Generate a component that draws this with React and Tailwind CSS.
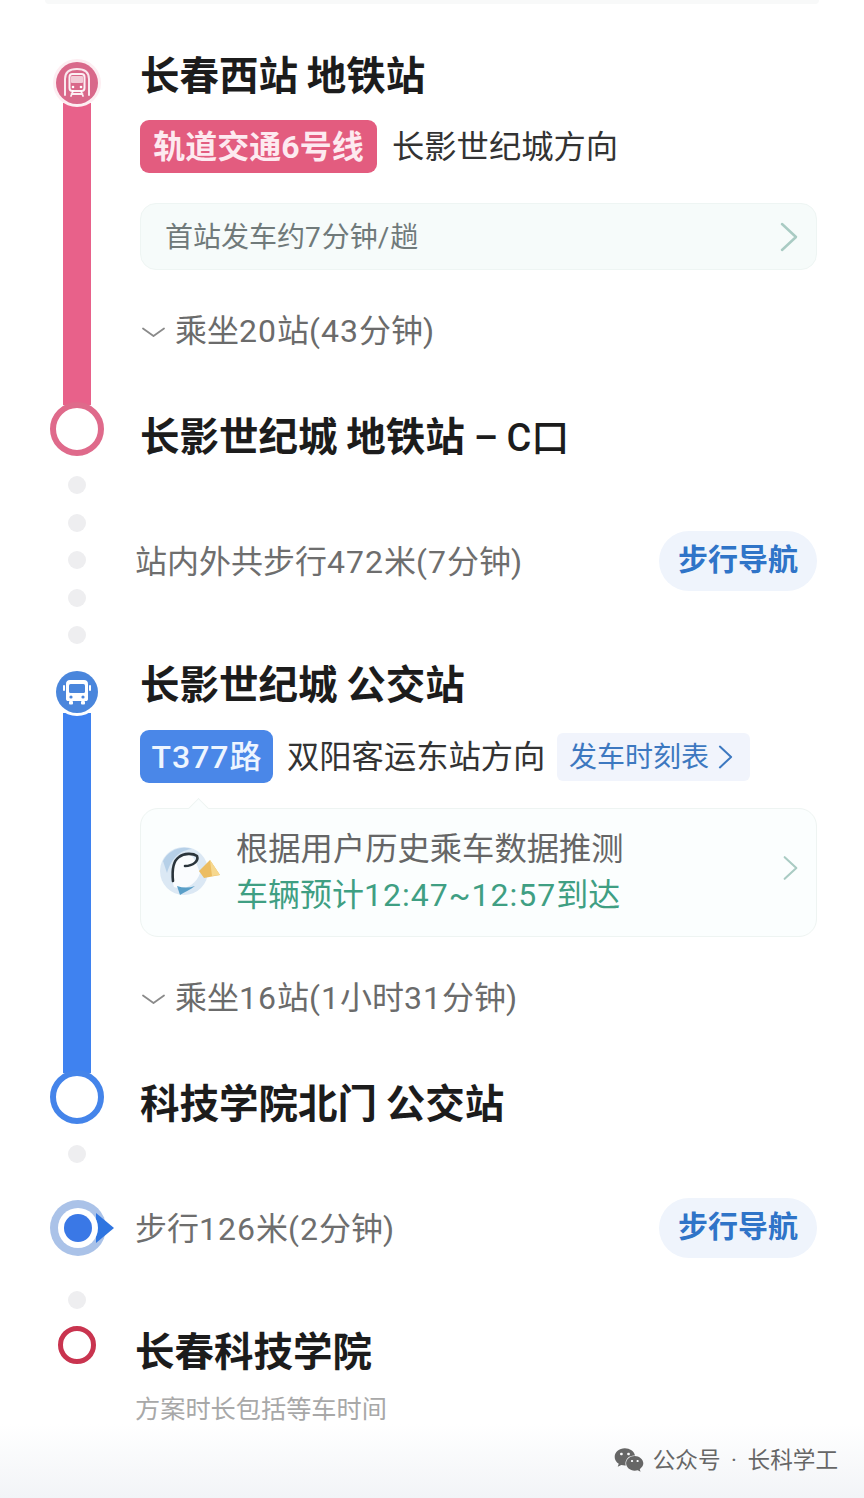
import React from 'react';
import { FaWeixin } from 'react-icons/fa';

const Chevron = ({ className, color = '#a9cbc3', w = 18, h = 30, sw = 2.5 }) => (
  <svg className={className} width={w} height={h} viewBox="0 0 18 30" fill="none">
    <path d="M2 2 L16 15 L2 28" stroke={color} strokeWidth={sw} strokeLinecap="round" strokeLinejoin="round" />
  </svg>
);

const TrainIcon = () => (
  <svg width="42" height="42" viewBox="0 0 42 42" fill="none" stroke="#fff" strokeLinecap="round" strokeLinejoin="round">
    <path d="M9 33 V17 C9 10 14 7 21 7 C28 7 33 10 33 17 V33" strokeWidth="2" opacity="0.85" />
    <rect x="13.5" y="12" width="15" height="17" rx="3" strokeWidth="2" opacity="0.9" />
    <rect x="15" y="14" width="12" height="7" rx="1" fill="#fff" stroke="none" opacity="0.65" />
    <circle cx="17" cy="25" r="1.3" fill="#fff" stroke="none" />
    <circle cx="25" cy="25" r="1.3" fill="#fff" stroke="none" />
    <path d="M15 34 L17 29 M27 34 L25 29 M15.5 32 H26.5" strokeWidth="1.8" opacity="0.9" />
  </svg>
);

const BusIcon = () => (
  <svg width="42" height="42" viewBox="0 0 42 42" fill="none">
    <path d="M14 9 H28 C30.5 9 32 10.5 32 13 V28 C32 29.5 31 30 30 30 H12 C11 30 10 29.5 10 28 V13 C10 10.5 11.5 9 14 9 Z" fill="#fff" />
    <rect x="13" y="13" width="16" height="9" rx="1.5" fill="#4a86dc" />
    <rect x="7" y="14" width="2" height="6" rx="1" fill="#fff" />
    <rect x="33" y="14" width="2" height="6" rx="1" fill="#fff" />
    <rect x="13" y="30" width="4" height="3.5" rx="1" fill="#fff" />
    <rect x="25" y="30" width="4" height="3.5" rx="1" fill="#fff" />
    <circle cx="15" cy="26" r="1.6" fill="#4a86dc" />
    <circle cx="27" cy="26" r="1.6" fill="#4a86dc" />
  </svg>
);

const Mascot = () => (
  <svg width="62" height="60" viewBox="0 0 62 60" fill="none">
    <circle cx="24" cy="28" r="24" fill="#dbe8f4" />
    <path d="M3 18 C8 8 20 2 32 6 C22 7 12 13 7 30 Z" fill="#b6d0e8" />
    <path d="M14 44 C24 48 36 42 40 30 C37 22 35 14 28 10 C21 9 15 15 14 24 C13 32 12 38 14 44 Z" fill="#fafcfe" />
    <path d="M13 38 C12 28 13 18 19 14 C24 10 33 10 37 13 C39 18 33 23 25 23" stroke="#2a343b" strokeWidth="2.6" strokeLinecap="round" />
    <path d="M17 43 C18 46 19 49 20 52 C24 49 30 47 35 43 C29 45 23 45 17 43 Z" fill="#5a9fc8" />
    <path d="M39 28 L50 17 L60 32 L44 35 Z" fill="#ecbd62" />
    <path d="M50 17 L60 32 L52 33 Z" fill="#f6d88f" />
  </svg>
);

const Locator = () => (
  <svg width="66" height="58" viewBox="0 0 66 58" fill="none">
    <circle cx="28" cy="29" r="28" fill="#aac2e8" />
    <path d="M46 14 L64 29 L46 44 Z" fill="#2f75e0" />
    <circle cx="28" cy="29" r="20" fill="#fff" />
    <circle cx="28" cy="29" r="14" fill="#3a78e6" />
  </svg>
);

const Dot = () => <div className="w-[18px] h-[18px] rounded-full bg-[#eeeef0] shrink-0" />;

// digits in the shot run wider than the font's own
const Num = ({ children }) => <span className="tracking-[1px]">{children}</span>;

const Title = ({ children, className = '' }) => (
  <div className={`h-[50px] leading-[52px] text-[39.5px] font-bold text-[#1c1c1c] whitespace-nowrap [word-spacing:-1px] ${className}`}>{children}</div>
);

const RideInfo = ({ children }) => (
  <div className="flex items-center h-[48px] mt-[37px]">
    <svg className="ml-[2px] mt-[3px]" width="23" height="11" viewBox="0 0 23 11" fill="none">
      <path d="M1 1.5 L11.5 9 L22 1.5" stroke="#8a8a8a" strokeWidth="1.8" strokeLinecap="round" strokeLinejoin="round" />
    </svg>
    <span className="ml-[10px] text-[32px] text-[#6b6b6b] whitespace-nowrap">{children}</span>
  </div>
);

const NavButton = () => (
  <button className="w-[158px] h-[60px] pb-[4px] rounded-full bg-[#eff4fc] text-[30px] font-bold text-[#2f74c8] shrink-0">步行导航</button>
);

export default function App() {
  return (
    <div className="w-[864px] h-[1498px] overflow-hidden bg-white font-['Roboto','Noto_Sans_CJK_SC',sans-serif]">
      <div className="mx-[45px] h-[4px] rounded-b-md bg-[#f8f9f9]" />

      {/* 地铁段 */}
      <div className="flex pr-[47px]">
        <div className="w-[140px] pl-[14px] flex flex-col items-center shrink-0">
          <div className="w-[42px] h-[42px] mt-[58px] rounded-full bg-[#d9688a] ring-[3px] ring-[#fdeef2] relative z-10 flex items-center justify-center">
            <TrainIcon />
          </div>
          <div className="w-[28px] h-[302px] bg-[#e8618a] -mt-[1px]" />
          <div className="w-[54px] h-[54px] -mt-[3px] rounded-full border-[6px] border-[#df6a8b] bg-white relative z-10" />
        </div>
        <div className="flex-1 pt-[46px]">
          <Title className="leading-[54px]">长春西站 地铁站</Title>
          <div className="flex items-center mt-[20px]">
            <div className="w-[237px] h-[53px] rounded-[9px] bg-[#e35c7f] text-[32px] font-bold text-[#fdeaf0] flex items-center justify-center whitespace-nowrap">轨道交通6号线</div>
            <span className="ml-[15px] pt-[2px] text-[32.3px] text-[#333]">长影世纪城方向</span>
          </div>
          <div className="flex items-center justify-between h-[67px] mt-[30px] pl-[24px] pr-[18px] rounded-[16px] bg-[#f6fbfa] border border-[#eef5f3]">
            <span className="pt-[2px] text-[28px] text-[#707a7a]">首站发车约<Num>7</Num>分钟<Num>/</Num>趟</span>
            <Chevron />
          </div>
          <RideInfo>乘坐<Num>20</Num>站<Num>(43</Num>分钟<Num>)</Num></RideInfo>
          <Title className="mt-[57px]">长影世纪城 地铁站 <span className="font-medium text-[38px] [word-spacing:-1px]">– C口</span></Title>
        </div>
      </div>

      {/* 站内步行 */}
      <div className="flex pr-[47px]">
        <div className="w-[136px] pl-[18px] pt-[14px] pb-[16px] flex flex-col items-center gap-[19.5px] shrink-0">
          <Dot /><Dot /><Dot /><Dot /><Dot />
        </div>
        <div className="flex-1 flex items-center justify-between">
          <span className="-ml-[1px] pt-[2px] text-[32px] text-[#6e6e6e] whitespace-nowrap">站内外共步行<Num>472</Num>米<Num>(7</Num>分钟<Num>)</Num></span>
          <NavButton />
        </div>
      </div>

      {/* 公交段 */}
      <div className="flex pr-[47px]">
        <div className="w-[140px] pl-[14px] flex flex-col items-center shrink-0">
          <div className="w-[42px] h-[42px] mt-[11px] rounded-full bg-[#4a86dc] ring-[3px] ring-white relative z-10 flex items-center justify-center">
            <BusIcon />
          </div>
          <div className="w-[28px] h-[360px] bg-[#3f82f0]" />
          <div className="w-[54px] h-[54px] -mt-[3px] rounded-full border-[6px] border-[#4484ea] bg-white relative z-10" />
        </div>
        <div className="flex-1">
          <Title>长影世纪城 公交站</Title>
          <div className="flex items-center mt-[20px]">
            <div className="w-[133px] h-[53px] rounded-[9px] bg-[#4a87e8] text-[32px] font-medium text-[#eef5ff] flex items-center justify-center whitespace-nowrap"><Num>T377</Num>路</div>
            <span className="ml-[14px] w-[270px] pt-[2px] text-[32.3px] text-[#333] whitespace-nowrap">双阳客运东站方向</span>
            <div className="w-[193px] h-[48px] rounded-[6px] bg-[#f1f4fc] flex items-center pl-[12px]">
              <span className="pt-[2px] text-[28px] text-[#3d78c0] whitespace-nowrap">发车时刻表</span>
              <Chevron className="ml-[9px]" color="#3d78c0" w={15} h={24} sw={2.5} />
            </div>
          </div>
          <div className="relative flex items-center h-[129px] mt-[25px] pl-[19px] pr-[18px] rounded-[18px] bg-[#fbfefe] border border-[#eef4f2]">
            <div className="absolute -top-[8px] left-[50px] w-[15px] h-[15px] rotate-45 bg-[#fbfefe] border-l border-t border-[#eef4f2]" />
            <Mascot />
            <div className="ml-[14px] flex-1 pb-[2px]">
              <div className="text-[32.3px] leading-[46px] text-[#666]">根据用户历史乘车数据推测</div>
              <div className="text-[32px] leading-[46px] text-[#3f9f83] whitespace-nowrap">车辆预计<Num>12:47~12:57</Num>到达</div>
            </div>
            <Chevron className="mb-[10px]" w={15} h={26} />
          </div>
          <RideInfo>乘坐<Num>16</Num>站<Num>(1</Num>小时<Num>31</Num>分钟<Num>)</Num></RideInfo>
          <Title className="mt-[57px]">科技学院北门 公交站</Title>
        </div>
      </div>

      {/* 终点步行 */}
      <div className="w-[136px] pl-[18px] pt-[16px] flex justify-center"><Dot /></div>
      <div className="flex items-center h-[60px] mt-[35px] pr-[47px]">
        <div className="w-[136px] pl-[50px] shrink-0"><Locator /></div>
        <div className="flex-1 flex items-center justify-between">
          <span className="-ml-[1px] pt-[2px] text-[32px] text-[#6e6e6e] whitespace-nowrap">步行<Num>126</Num>米<Num>(2</Num>分钟<Num>)</Num></span>
          <NavButton />
        </div>
      </div>
      <div className="w-[136px] pl-[18px] mt-[33px] flex justify-center"><Dot /></div>

      {/* 终点 */}
      <div className="flex mt-[17px]">
        <div className="w-[136px] pl-[18px] flex justify-center shrink-0">
          <div className="w-[38px] h-[38px] rounded-full border-[5px] border-[#c9344f] bg-white" />
        </div>
        <div className="pt-[1px]">
          <Title className="-ml-[1px]">长春科技学院</Title>
          <div className="mt-[17px] -ml-[1px] h-[30px] leading-[32px] text-[25.2px] text-[#a8a8a8] whitespace-nowrap">方案时长包括等车时间</div>
        </div>
      </div>

      <div className="h-[74px] pt-[21px] bg-gradient-to-b from-white to-[#f2f4f7] flex justify-end pr-[26px]">
        <div className="flex items-center h-[30px] text-[22.6px] text-[#666]">
          <FaWeixin className="text-[30px] text-[#666] mr-[9px]" />
          <span className="pt-[2px] whitespace-nowrap [word-spacing:5px]">公众号 · 长科学工</span>
        </div>
      </div>
    </div>
  );
}
